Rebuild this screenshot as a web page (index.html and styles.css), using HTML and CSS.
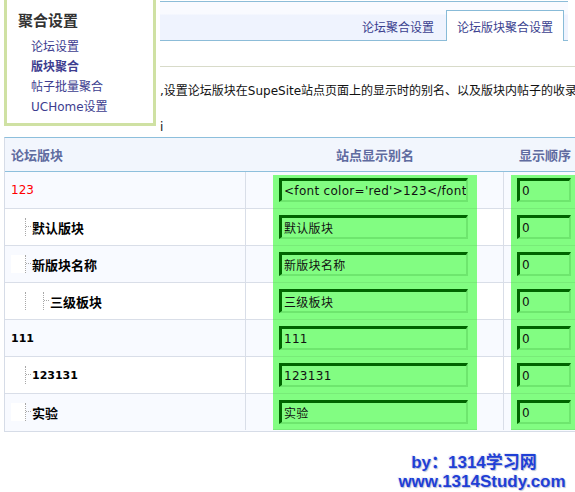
FILE: index.html
```html
<!DOCTYPE html>
<html lang="zh-CN">
<head>
<meta charset="utf-8">
<title>论坛版块聚合设置</title>
<link rel="stylesheet" href="styles.css">
</head>
<body>
<div class="top">
  <div class="menu">
    <div class="menu-title">聚合设置</div>
    <a class="menu-link">论坛设置</a>
    <a class="menu-link current">版块聚合</a>
    <a class="menu-link">帖子批量聚合</a>
    <a class="menu-link">UCHome设置</a>
  </div>
  <div class="main">
    <div class="tabbar">
      <div class="tab">论坛聚合设置</div>
      <div class="tab active">论坛版块聚合设置</div>
    </div>
    <div class="rule"></div>
    <div class="desc">,设置论坛版块在SupeSite站点页面上的显示时的别名、以及版块内帖子的收录规则</div>
    <div class="tip">i</div>
  </div>
</div>

<div class="table">
  <div class="head">
    <div class="h1">论坛版块</div>
    <div class="h2">站点显示别名</div>
    <div class="h3">显示顺序</div>
  </div>

  <div class="row odd">
    <div class="c1"><span class="red">123</span></div>
    <div class="c2"><div class="hl first"><input class="alias" type="text" value="<font color='red'>123</font>"></div></div>
    <div class="c3"><div class="hl first"><input class="order" type="text" value="0"></div></div>
  </div>
  <div class="row">
    <div class="c1"><span class="ind"></span><span class="dash"></span><span class="name">默认版块</span></div>
    <div class="c2"><div class="hl"><input class="alias" type="text" value="默认版块"></div></div>
    <div class="c3"><div class="hl"><input class="order" type="text" value="0"></div></div>
  </div>
  <div class="row odd">
    <div class="c1"><span class="ind"></span><span class="dash"></span><span class="name">新版块名称</span></div>
    <div class="c2"><div class="hl"><input class="alias" type="text" value="新版块名称"></div></div>
    <div class="c3"><div class="hl"><input class="order" type="text" value="0"></div></div>
  </div>
  <div class="row">
    <div class="c1"><span class="ind"></span><span class="ind ind2"></span><span class="dash"></span><span class="name">三级板块</span></div>
    <div class="c2"><div class="hl"><input class="alias" type="text" value="三级板块"></div></div>
    <div class="c3"><div class="hl"><input class="order" type="text" value="0"></div></div>
  </div>
  <div class="row odd">
    <div class="c1"><span class="num">111</span></div>
    <div class="c2"><div class="hl"><input class="alias" type="text" value="111"></div></div>
    <div class="c3"><div class="hl"><input class="order" type="text" value="0"></div></div>
  </div>
  <div class="row">
    <div class="c1"><span class="ind"></span><span class="dash"></span><span class="num">123131</span></div>
    <div class="c2"><div class="hl"><input class="alias" type="text" value="123131"></div></div>
    <div class="c3"><div class="hl"><input class="order" type="text" value="0"></div></div>
  </div>
  <div class="row odd">
    <div class="c1"><span class="ind"></span><span class="dash"></span><span class="name">实验</span></div>
    <div class="c2"><div class="hl"><input class="alias" type="text" value="实验"></div></div>
    <div class="c3"><div class="hl"><input class="order" type="text" value="0"></div></div>
  </div>
</div>

<div class="mark">
  <div class="mark-by">by：1314学习网</div>
  <div>www.1314Study.com</div>
</div>
</body>
</html>
```

FILE: styles.css
```css
html, body {
  margin: 0;
  padding: 0;
  background: #ffffff;
  overflow: hidden;
  width: 575px;
  height: 492px;
}
body {
  font-family: "DejaVu Sans", "Noto Sans CJK SC", sans-serif;
  font-size: 12px;
  color: #000;
}

/* ---------- top area ---------- */
.top {
  display: flex;
  align-items: flex-start;
  height: 137px;
}
.menu {
  box-sizing: border-box;
  width: 152px;
  height: 126px;
  margin-left: 4px;
  border: 3px solid #cfe1a3;
  border-top: none;
  background: #ffffff;
  flex: none;
}
.menu-title {
  font-family: "Noto Sans CJK SC", sans-serif;
  font-weight: bold;
  font-size: 15px;
  line-height: 20px;
  color: #333;
  padding-left: 11px;
  margin-top: 10px;
  margin-bottom: 7px;
}
.menu-link {
  display: block;
  font-family: "DejaVu Sans", "Noto Sans CJK SC", sans-serif;
  font-size: 12px;
  line-height: 20px;
  padding-left: 24px;
  color: #3d3d8f;
}
.menu-link.current {
  font-weight: bold;
}

.main {
  margin-left: 4px;
  width: 415px;
  overflow: hidden;
  flex: none;
}
.tabbar {
  box-sizing: border-box;
  width: 408px;
  height: 40px;
  margin-top: 1px;
  border-top: 1px solid #8cbcd8;
  border-bottom: 1px solid #8cbcd8;
  background: linear-gradient(#f9faff 0, #f9faff 12px, #eff3fe 13px, #eff3fe 100%);
  display: flex;
  justify-content: flex-end;
  align-items: flex-end;
  padding-right: 4px;
}
.tab {
  font-family: "Noto Sans CJK SC", sans-serif;
  font-size: 12px;
  line-height: 26px;
  color: #3b3f8f;
  padding: 3px 11px 1px 11px;
  margin-bottom: -1px;
  border: 1px solid transparent;
  border-bottom: none;
}
.tab.active {
  background: #ffffff;
  border-color: #88bbd8;
  padding: 3px 10px 1px 10px;
}
.rule {
  margin-top: 25px;
  height: 1px;
  background: #d8dbc9;
}
.desc {
  margin-top: 14px;
  line-height: 20px;
  white-space: nowrap;
  overflow: hidden;
  color: #111;
}
.tip {
  margin-top: 16px;
  line-height: 20px;
  color: #111;
}

/* ---------- table ---------- */
.table {
  box-sizing: border-box;
  margin-left: 4px;
  width: 600px;
  border-left: 1px solid #d6dce7;
  border-top: 1px solid #8dbfdc;
  border-bottom: 1px solid #d6dce7;
}
.head {
  display: grid;
  grid-template-columns: 241px 258px 1fr;
  height: 34px;
  box-sizing: border-box;
  border-bottom: 1px solid #8dbfdc;
  background: #f2f6fd;
  align-items: center;
  font-family: "Noto Sans CJK SC", sans-serif;
  font-weight: bold;
  font-size: 13px;
  color: #5f6ba0;
}
.head .h1 { padding-left: 6px; }
.head .h2 { text-align: center; }
.head .h3 { padding-left: 15px; }

.row {
  display: grid;
  grid-template-columns: 241px 258px 1fr;
  height: 37px;
  box-sizing: border-box;
  border-bottom: 1px solid #d9dee8;
  background: #ffffff;
}
.row:last-child {
  border-bottom: none;
}
.row.odd {
  background: #f8faff;
}
.c1 {
  box-sizing: border-box;
  border-right: 1px solid #d9dee8;
  padding-left: 6px;
  display: flex;
  align-items: center;
  height: 36px;
}
.c2 {
  box-sizing: border-box;
  border-right: 1px solid #d9dee8;
  height: 36px;
  padding-left: 27px;
}
.c3 {
  height: 36px;
  padding-left: 7px;
}
.hl {
  height: 37px;
  margin-bottom: -1px;
  position: relative;
  background: linear-gradient(to top, #78ec78 0, #78ec78 1px, #82fd82 1px, #82fd82 100%);
  box-sizing: border-box;
  padding-top: 6px;
  padding-left: 6px;
}
.c2 .hl { width: 204px; }
.hl.first {
  margin-top: 3px;
  height: 34px;
  padding-top: 3px;
}
.row:last-child .hl {
  height: 36px;
  margin-bottom: 0;
}
.alias, .order {
  box-sizing: border-box;
  height: 24px;
  margin: 0;
  display: block;
  background: #82fd82;
  border-style: solid;
  border-width: 3px 2px 2px 3px;
  border-color: #006400 #6ee66e #6ee66e #006400;
  font-family: "DejaVu Sans", "Noto Sans CJK SC", sans-serif;
  font-size: 12px;
  color: #111;
  padding: 0 0 0 2px;
  outline: none;
}
.alias { width: 189px; letter-spacing: 0.3px; }
.order { width: 54px; }

.red {
  color: #ff0000;
  font-family: "DejaVu Sans", sans-serif;
  font-size: 12px;
}
.name {
  font-family: "Noto Sans CJK SC", sans-serif;
  font-weight: bold;
  font-size: 13px;
  color: #000;
}
.num {
  font-family: "DejaVu Sans", sans-serif;
  font-weight: bold;
  font-size: 11px;
  color: #000;
}
.ind {
  display: inline-block;
  width: 14px;
  height: 18px;
  background: #ffffff;
  border-right: 1px dotted #a8a8a8;
  flex: none;
}
.ind.ind2 {
  width: 17px;
}
.dash {
  display: inline-block;
  width: 5px;
  height: 1px;
  margin: 0 1px 0 0;
  border-top: 1px dotted #a8a8a8;
  flex: none;
}

/* ---------- watermark ---------- */
.mark {
  margin-top: 21px;
  margin-left: 392px;
  width: 180px;
  text-align: center;
  font-family: "Liberation Sans", "Noto Sans CJK SC", sans-serif;
  font-weight: bold;
  font-size: 17px;
  line-height: 19px;
  color: #1f3fd6;
  text-shadow: 1px 1px 1px #b8c0d8, -1px -1px 1px #e8ecf8;
  white-space: nowrap;
}
.mark-by {
  padding-right: 16px;
}
```
